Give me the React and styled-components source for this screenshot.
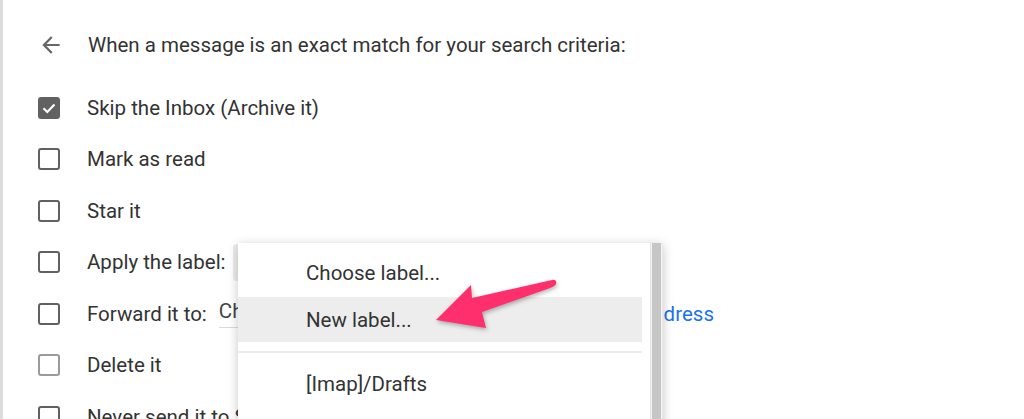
import React from "react";
import styled, { createGlobalStyle } from "styled-components";

const Global = createGlobalStyle`
  html, body {
    margin: 0;
    padding: 0;
    background: #fff;
  }
  body {
    font-family: Roboto, "Liberation Sans", Arial, sans-serif;
    color: #333;
  }
`;

const Page = styled.div`
  position: relative;
  height: 419px;
  overflow: hidden;
  border-left: 3px solid #dcdcdc;
  box-sizing: border-box;
  padding: 33px 0 0 35px;
`;

const Header = styled.div`
  display: flex;
  align-items: center;
  height: 24px;
  font-size: 20.5px;
  gap: 24px;
  white-space: nowrap;
`;

const BackIcon = styled.svg`
  width: 26px;
  height: 26px;
  flex: none;
`;

const List = styled.div`
  display: flex;
  flex-direction: column;
  margin-top: 25px;
`;

const Row = styled.div`
  display: flex;
  align-items: center;
  height: 51.5px;
  font-size: 20.5px;
  white-space: nowrap;
`;

const Box = styled.span`
  flex: none;
  box-sizing: border-box;
  width: 22px;
  height: 22px;
  border-radius: 3px;
  border: 2px solid ${(p) => (p.$muted ? "#9a9a9a" : "#616161")};
  background: ${(p) => (p.$checked ? "#616161" : "transparent")};
  display: flex;
  align-items: center;
  justify-content: center;
  margin: 0 27px 0 0;
`;

const Select = styled.span`
  display: inline-block;
  width: 190px;
  height: 37px;
  margin-left: 7px;
  background: #ececec;
  border-radius: 4px;
`;

const FieldInput = styled.span`
  display: inline-block;
  width: 261px;
  margin-left: 12px;
  padding-bottom: 4px;
  border-bottom: 1px solid #dadada;
  color: #444;
`;

const Link = styled.span`
  margin-left: 18px;
  color: #1a73e8;
`;

const Menu = styled.div`
  position: absolute;
  left: 235px;
  top: 243px;
  width: 425px;
  height: 200px;
  background: #fff;
  box-shadow: 0 2px 10px rgba(0, 0, 0, 0.22);
  display: flex;
`;

const MenuList = styled.div`
  flex: 1;
  padding-top: 6px;
  padding-right: 8px;
`;

const Item = styled.div`
  height: ${(p) => p.$h || 45}px;
  display: flex;
  align-items: center;
  padding-left: 68px;
  font-size: 20.5px;
  color: #333;
  background: ${(p) => (p.$active ? "#ededed" : "transparent")};
`;

const Divider = styled.div`
  height: 2px;
  background: #ebebeb;
  margin: 9px 0 13px;
`;

const Scrollbar = styled.div`
  width: 13px;
  flex: none;
  box-sizing: border-box;
  border-left: 1px solid #e2e2e2;
  border-right: 1px solid #e8e8e8;
  padding: 0 1px;
  background: #f4f4f4;
`;

const Thumb = styled.div`
  height: 100%;
  background: #c6c6c6;
`;

const Arrow = styled.svg`
  position: absolute;
  left: 425px;
  top: 274px;
  width: 140px;
  height: 62px;
  filter: drop-shadow(1px 2px 2px rgba(0, 0, 0, 0.3));
`;

const Check = () => (
  <svg width="16" height="16" viewBox="0 0 16 16">
    <path d="M2.5 8.2 L6.3 12 L13.5 4.6" fill="none" stroke="#fff" strokeWidth="2.2" />
  </svg>
);

export default function App() {
  return (
    <>
      <Global />
      <Page>
        <Header>
          <BackIcon viewBox="0 0 24 24">
            <path d="M20 11H7.83l5.59-5.59L12 4l-8 8 8 8 1.41-1.41L7.83 13H20v-2z" fill="#666" />
          </BackIcon>
          When a message is an exact match for your search criteria:
        </Header>
        <List>
          <Row>
            <Box $checked>
              <Check />
            </Box>
            Skip the Inbox (Archive it)
          </Row>
          <Row>
            <Box />
            Mark as read
          </Row>
          <Row>
            <Box />
            Star it
          </Row>
          <Row>
            <Box />
            Apply the label:
            <Select />
          </Row>
          <Row>
            <Box />
            Forward it to:
            <FieldInput>Choose an address...</FieldInput>
            <Link>add forwarding address</Link>
          </Row>
          <Row>
            <Box $muted />
            Delete it
          </Row>
          <Row>
            <Box />
            Never send it to Spam
          </Row>
        </List>

        <Menu>
          <MenuList>
            <Item $h={48}>Choose label...</Item>
            <Item $active>New label...</Item>
            <Divider />
            <Item $h={36}>[Imap]/Drafts</Item>
          </MenuList>
          <Scrollbar>
            <Thumb />
          </Scrollbar>
        </Menu>

        <Arrow viewBox="0 0 140 62">
          <path
            d="M8 46 L43 11 L44 24 L124 6 Q129 5 128 10 Q127 12 122 14 L54 38 L58 54 Z"
            fill="#ff2f6d"
          />
        </Arrow>
      </Page>
    </>
  );
}
